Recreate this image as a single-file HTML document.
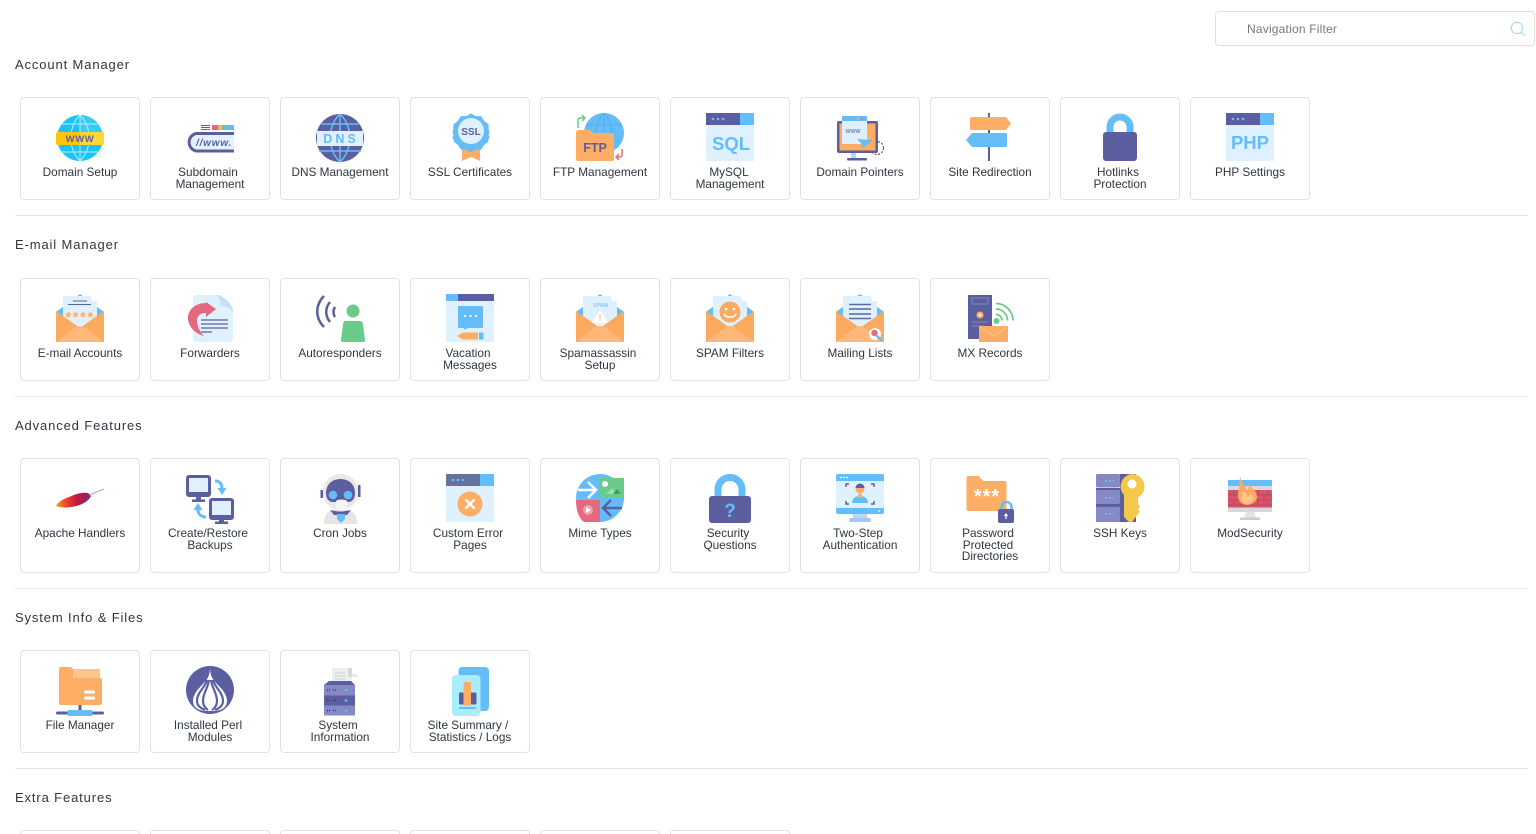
<!DOCTYPE html>
<html><head><meta charset="utf-8"><title>Control Panel</title>
<style>
html,body{margin:0;padding:0;background:#fff;width:1536px;height:834px;overflow:hidden;font-family:"Liberation Sans",sans-serif}
.t{position:absolute;width:118px;border:1px solid #e2e2e2;border-radius:4px;background:#fff}
.t svg{position:absolute;left:35px;top:15px;width:48px;height:48px;overflow:visible}
.l{position:absolute;left:0;right:0;top:69px;text-align:center;font-size:11.8px;line-height:11.6px;color:#2f3640}
.s{position:relative;left:-2px}
h2{position:absolute;left:15px;margin:0;font-weight:normal;font-size:13px;line-height:16px;letter-spacing:.87px;color:#2f3640}
.d{position:absolute;left:15px;width:1513px;height:1px;background:#e3e3e3}
.f{position:absolute;left:1215px;top:11px;width:318px;height:33px;border:1px solid #e0e0e0;border-radius:4px}
.f span{position:absolute;left:31px;top:10px;font-size:12px;line-height:15px;color:#777;letter-spacing:.2px}
.f svg{position:absolute;left:294px;top:9px}
.e{height:3px;border-bottom:0;border-radius:4px 4px 0 0}
text{font-family:"Liberation Sans",sans-serif}
</style></head><body>

<div class="f"><span>Navigation Filter</span><svg width="16" height="16" viewBox="0 0 16 16" fill="none" stroke="#a5dcf8" stroke-width="1.1"><circle cx="7" cy="7" r="5.7"/><path d="M11 11l4 4"/></svg></div>

<h2 style="top:57px">Account Manager</h2>

<div class="t" style="left:20px;top:97px;height:101px"><svg viewBox="0 0 48 48"><circle cx="24" cy="25" r="23" fill="#1cc2f4"/><path d="M24 2a23 23 0 0 1 23 23H24z" fill="#35cdf8"/><path d="M6 11h36M3 39h42M24 2v46M24 2c-12 12-12 34 0 46M24 2c12 12 12 34 0 46" fill="none" stroke="#b9eefc" stroke-width="1"/><rect y="19" width="48" height="13" rx="2" fill="#ffc40f"/><rect x="24" y="19" width="24" height="13" rx="2" fill="#ffd633"/><text x="24" y="29" font-size="9.500" font-weight="bold" fill="#5c5f9f" text-anchor="middle" letter-spacing=".6">WWW</text></svg><div class="l">Domain Setup</div></div>

<div class="t" style="left:150px;top:97px;height:101px"><svg viewBox="0 0 48 48"><path d="M15 12.500h9M15 14.500h9M15 16.500h9" stroke="#5c5f9f" stroke-width="1.100"/><rect x="26" y="12" width="6" height="5" fill="#e3697f"/><rect x="32" y="12" width="4" height="5" fill="#fdad64"/><rect x="36" y="12" width="4" height="5" fill="#69ca8a"/><rect x="40" y="12" width="8" height="5" fill="#64bdf9"/><path d="M48 20.500H10a9 9 0 0 0 0 17.500h38" fill="#e2f2fe" stroke="#5c5f9f" stroke-width="3"/><text x="10" y="33" font-size="10" font-weight="bold" font-style="italic" fill="#5c5f9f" letter-spacing=".8">//www.</text></svg><div class="l"><span class="s">Subdomain</span><br>Management</div></div>

<div class="t" style="left:280px;top:97px;height:101px"><svg viewBox="0 0 48 48"><circle cx="24" cy="25" r="24" fill="#5c5f9f"/><path d="M5 11h38M3 38h42M24 1v48M24 1c-13 12-13 36 0 48M24 1c13 12 13 36 0 48" fill="none" stroke="#64bdf9" stroke-width="1.500"/><rect x="1" y="18" width="46" height="15" fill="#dff1fe"/><text x="25" y="30" font-size="12.500" font-weight="bold" fill="#64bdf9" text-anchor="middle" letter-spacing="3">DNS</text></svg><div class="l">DNS Management</div></div>

<div class="t" style="left:410px;top:97px;height:101px"><svg viewBox="0 0 48 48"><path d="M16 28h18v20l-9-4-9 4z" fill="#fdad64"/><path transform="translate(25 18) scale(.93) translate(-25 -19)" d="M25 0l5 3 6 0 3 5 5 4 0 6 1 1-1 5 1 1-2 6-4 3-3 5-6 0-5 3-5-3-6 0-3-5-4-3-2-6 1-1-1-5 1-1 0-6 5-4 3-5 6 0z" fill="#64bdf9"/><circle cx="25" cy="18" r="13" fill="#dff1fe"/><text x="25" y="22" font-size="10" font-weight="bold" fill="#5c5f9f" text-anchor="middle">SSL</text></svg><div class="l">SSL Certificates</div></div>

<div class="t" style="left:540px;top:97px;height:101px"><svg viewBox="0 0 48 48"><circle cx="28" cy="20" r="20" fill="#64bdf9"/><path d="M28 0v40M28 0c-10 10-10 30 0 40M28 0c10 10 10 30 0 40M10 12h36M10 28h36" fill="none" stroke="#4fa9e8" stroke-width=".8"/><path d="M2 15V7a2 2 0 0 1 2-2h4M6 2l3 3-3 3" fill="none" stroke="#69ca8a" stroke-width="1.500"/><path d="M46 36v6a2 2 0 0 1-2 2h-4M43 41l-3 3 3 3" fill="none" stroke="#e3697f" stroke-width="1.500"/><path d="M0 20a3 3 0 0 1 2-3h12l3 3h19a2 2 0 0 1 2 2v24a2 2 0 0 1-2 2H2a2 2 0 0 1-2-2z" fill="#fdad64"/><text x="19" y="39" font-size="12.500" font-weight="bold" fill="#5c5f9f" text-anchor="middle">FTP</text></svg><div class="l">FTP Management</div></div>

<div class="t" style="left:670px;top:97px;height:101px"><svg viewBox="0 0 48 48"><rect width="48" height="48" fill="#dff1fe"/><rect width="34" height="12" fill="#5c5f9f"/><path d="M34 0h13a1 1 0 0 1 1 1v11H34z" fill="#64bdf9"/><circle cx="7" cy="6" r="1.300" fill="#64bdf9"/><circle cx="12" cy="6" r="1.300" fill="#64bdf9"/><circle cx="17" cy="6" r="1.300" fill="#64bdf9"/><text x="25" y="37" font-size="18.500" font-weight="bold" fill="#64bdf9" text-anchor="middle">SQL</text></svg><div class="l"><span class="s" style="left:-1px">MySQL</span><br>Management</div></div>

<div class="t" style="left:800px;top:97px;height:101px"><svg viewBox="0 0 48 48"><path d="M15 39h5v7h-5z" fill="#b5d8f3"/><rect x="11" y="45" width="20" height="2.500" rx="1" fill="#5c5f9f"/><circle cx="41" cy="35" r="6.500" fill="none" stroke="#5c5f9f" stroke-width="1.300" stroke-dasharray="2 1.500"/><rect x="1" y="8" width="41" height="32" rx="2" fill="#5c5f9f"/><rect x="3.500" y="10.500" width="36" height="27" fill="#fdad64"/><rect x="6" y="3" width="25" height="28" fill="#dff1fe"/><path d="M6 3h25v5H6z" fill="#64bdf9"/><circle cx="18" cy="5.500" r="1" fill="#69ca8a"/><circle cx="22" cy="5.500" r="1" fill="#fdad64"/><circle cx="26" cy="5.500" r="1" fill="#e3697f"/><text x="17" y="20" font-size="7" fill="#5c5f9f" text-anchor="middle">www</text><path d="M21 26l16 1-10 8-2-5z" fill="#64bdf9"/></svg><div class="l">Domain Pointers</div></div>

<div class="t" style="left:930px;top:97px;height:101px"><svg viewBox="0 0 48 48"><rect x="22" width="2" height="48" fill="#5c5f9f"/><path d="M5 4h35l5 6.500-5 6.500H5a1 1 0 0 1-1-1V5a1 1 0 0 1 1-1z" fill="#fdad64"/><path d="M6 20h34a1 1 0 0 1 1 1v12a1 1 0 0 1-1 1H6l-6-7z" fill="#64bdf9"/></svg><div class="l">Site Redirection</div></div>

<div class="t" style="left:1060px;top:97px;height:101px"><svg viewBox="0 0 48 48"><path d="M14 21V14a10 10 0 0 1 20 0v7" fill="none" stroke="#64bdf9" stroke-width="7"/><rect x="7" y="19" width="34" height="29" rx="3" fill="#5c5f9f"/></svg><div class="l"><span class="s">Hotlinks</span><br>Protection</div></div>

<div class="t" style="left:1190px;top:97px;height:101px"><svg viewBox="0 0 48 48"><rect width="48" height="48" fill="#dff1fe"/><rect width="34" height="12" fill="#5c5f9f"/><path d="M34 0h13a1 1 0 0 1 1 1v11H34z" fill="#64bdf9"/><circle cx="7" cy="6" r="1.300" fill="#64bdf9"/><circle cx="12" cy="6" r="1.300" fill="#64bdf9"/><circle cx="17" cy="6" r="1.300" fill="#64bdf9"/><text x="24" y="36" font-size="18.500" font-weight="bold" fill="#64bdf9" text-anchor="middle">PHP</text></svg><div class="l">PHP Settings</div></div>

<div class="d" style="top:215px"></div>
<h2 style="top:237px">E-mail Manager</h2>

<div class="t" style="left:20px;top:278px;height:101px"><svg viewBox="0 0 48 48"><path d="M0 18L24 0l24 18-24 14z" fill="#64bdf9"/><path d="M7 2h28l1 5h5v20L24 36 7 27z" fill="#dff1fe"/><path d="M17 7h14M12 10.500h23" stroke="#5c5f9f" stroke-width="1.100"/><text x="24" y="28" font-size="15" font-weight="bold" fill="#fdad64" text-anchor="middle" letter-spacing="1.500">****</text><path d="M0 17l24 17 24-17v31H0z" fill="#fbaa60"/><path d="M0 48l20-15q4-2 8 0l20 15z" fill="#ffb878"/></svg><div class="l">E-mail Accounts</div></div>

<div class="t" style="left:150px;top:278px;height:101px"><svg viewBox="0 0 48 48"><path d="M10 1h25l12 13v31a3 3 0 0 1-3 3H10a3 3 0 0 1-3-3V4a3 3 0 0 1 3-3z" fill="#dff1fe"/><path d="M30 1c6 0 17 8 17 17-4-6-10-6-12-6 0-3-1-8-5-11z" fill="#c3dffc"/><path d="M20 8l10 7-10 8v-4c-5 0-9 2-9 8 0 5 3 11 7 15-8-2-16-9-16-18 0-9 8-15 18-15z" fill="#e3697f"/><path d="M15 26h27M15 30h27M15 34h27M15 38h11" stroke="#5c5f9f" stroke-width="1.300"/></svg><div class="l">Forwarders</div></div>

<div class="t" style="left:280px;top:278px;height:101px"><svg viewBox="0 0 48 48"><path d="M8 2c-9 9-9 22 0 31M14 8c-5 6-5 14 0 20M19 13c-2 3-2 7 0 10" fill="none" stroke="#5c5f9f" stroke-width="2.500"/><circle cx="37" cy="17" r="6.500" fill="#69ca8a"/><path d="M30 27h14c2 0 3 2 3 4l2 15c0 2-1 2-2 2H27c-1 0-2 0-2-2l2-15c0-3 1-4 3-4z" fill="#69ca8a"/></svg><div class="l">Autoresponders</div></div>

<div class="t" style="left:410px;top:278px;height:101px"><svg viewBox="0 0 48 48"><rect width="48" height="48" fill="#dff1fe"/><rect width="12" height="7" fill="#64bdf9"/><rect x="12" width="36" height="7" fill="#5c5f9f"/><path d="M13 12h23a1 1 0 0 1 1 1v20a1 1 0 0 1-1 1H23l-5 1.500V34h-5a1 1 0 0 1-1-1V13a1 1 0 0 1 1-1z" fill="#64bdf9"/><circle cx="19" cy="22" r="1.100" fill="#fff"/><circle cx="24.500" cy="22" r="1.100" fill="#fff"/><circle cx="30" cy="22" r="1.100" fill="#fff"/><path d="M11 42l6-3.500h15v7H17z" fill="#fdad64"/><rect x="33" y="38.500" width="4.500" height="7" fill="#64bdf9"/></svg><div class="l"><span class="s">Vacation</span><br>Messages</div></div>

<div class="t" style="left:540px;top:278px;height:101px"><svg viewBox="0 0 48 48"><path d="M0 18L24 0l24 18-24 14z" fill="#64bdf9"/><path d="M7 2h28l1 5h5v20L24 36 7 27z" fill="#dff1fe"/><text x="24.500" y="13" font-size="5.500" fill="#64bdf9" text-anchor="middle">SPAM</text><path d="M24 16l8 13H16z" fill="#fff"/><path d="M24 20v4M24 25v1.500" stroke="#fdad64" stroke-width="1"/><path d="M0 17l24 17 24-17v31H0z" fill="#fbaa60"/><path d="M0 48l20-15q4-2 8 0l20 15z" fill="#ffb878"/></svg><div class="l"><span class="s">Spamassassin</span><br>Setup</div></div>

<div class="t" style="left:670px;top:278px;height:101px"><svg viewBox="0 0 48 48"><path d="M0 18L24 0l24 18-24 14z" fill="#64bdf9"/><path d="M7 2h28l1 5h5v20L24 36 7 27z" fill="#dff1fe"/><circle cx="24" cy="18" r="10.500" fill="#fbaa60"/><circle cx="20" cy="15" r="1.400" fill="#fff"/><circle cx="28" cy="15" r="1.400" fill="#fff"/><path d="M18 19.500c1 5 11 5 12 0" fill="none" stroke="#fff" stroke-width="1.700"/><path d="M0 17l24 17 24-17v31H0z" fill="#fbaa60"/><path d="M0 48l20-15q4-2 8 0l20 15z" fill="#ffb878"/></svg><div class="l">SPAM Filters</div></div>

<div class="t" style="left:800px;top:278px;height:101px"><svg viewBox="0 0 48 48"><path d="M0 18L24 0l24 18-24 14z" fill="#64bdf9"/><path d="M7 2h28l1 5h5v20L24 36 7 27z" fill="#dff1fe"/><path d="M13 10.500h22M13 15h22M13 20h22M13 24.500h22" stroke="#5f64a3" stroke-width="1.600"/><path d="M0 17l24 17 24-17v31H0z" fill="#fbaa60"/><path d="M0 48l20-15q4-2 8 0l20 15z" fill="#ffb878"/><circle cx="39" cy="40" r="6" fill="#fff"/><circle cx="38.500" cy="39" r="3.200" fill="#e3697f"/><path d="M40 41l6 6" stroke="#64bdf9" stroke-width="2.500"/></svg><div class="l">Mailing Lists</div></div>

<div class="t" style="left:930px;top:278px;height:101px"><svg viewBox="0 0 48 48"><rect x="2" y="1" width="24" height="44" fill="#5c5f9f"/><rect x="6" y="4" width="16" height="6" fill="none" stroke="#8385bf" stroke-width="1"/><circle cx="14" cy="21" r="3.500" fill="#fdad64"/><circle cx="14" cy="21" r="1.300" fill="#fff"/><path d="M6 28h16M6 32h12" stroke="#8385bf" stroke-width="1"/><path d="M30 9.500a17 17 0 0 1 17 17M30 15a11.500 11.500 0 0 1 11.500 11.500M30 20.500a6 6 0 0 1 6 6" fill="none" stroke="#69ca8a" stroke-width="1.700"/><circle cx="30.500" cy="27" r="3" fill="#69ca8a"/><rect x="13" y="32" width="29" height="16" fill="#fdad64"/><path d="M14 33l14 9 13-9" fill="none" stroke="#ffc48d" stroke-width="1"/></svg><div class="l">MX Records</div></div>

<div class="d" style="top:396px"></div>
<h2 style="top:418px">Advanced Features</h2>

<div class="t" style="left:20px;top:458px;height:113px"><svg viewBox="0 0 48 48"><defs><linearGradient id="a" x1="0" x2="1"><stop offset="0" stop-color="#fba01e"/><stop offset=".3" stop-color="#e7442f"/><stop offset=".6" stop-color="#c4173f"/><stop offset="1" stop-color="#7d2a70"/></linearGradient></defs><path d="M0 32c2-4 7-7 13-9 7-3 12-5 19-4l3 3c-2 4-5 6-9 8-7 3-18 5-26 2z" fill="url(#a)"/><path d="M33 21l15-6" stroke="#a77ea9" stroke-width=".7"/></svg><div class="l">Apache Handlers</div></div>

<div class="t" style="left:150px;top:458px;height:113px"><svg viewBox="0 0 48 48"><rect y="1" width="25" height="22" rx="3" fill="#5c5f9f"/><rect x="3" y="4" width="19" height="14" fill="#dff1fe"/><rect x="10" y="23" width="5" height="3" fill="#5c5f9f"/><rect x="6" y="25.500" width="13" height="2.500" fill="#5c5f9f"/><rect x="23" y="24" width="25" height="22" rx="3" fill="#5c5f9f"/><rect x="26" y="27" width="19" height="14" fill="#dff1fe"/><rect x="33" y="46" width="5" height="2" fill="#5c5f9f"/><rect x="29" y="47.500" width="13" height="2.500" fill="#5c5f9f"/><path d="M29 7c4 0 7 2 7 8" fill="none" stroke="#64bdf9" stroke-width="3"/><path d="M31.500 14h9l-4.500 7z" fill="#64bdf9"/><path d="M20 43c-4 0-8-2-8-8" fill="none" stroke="#64bdf9" stroke-width="3"/><path d="M7.500 36h9l-4.500-7z" fill="#64bdf9"/></svg><div class="l"><span class="s">Create/Restore</span><br>Backups</div></div>

<div class="t" style="left:280px;top:458px;height:113px"><svg viewBox="0 0 48 48"><circle cx="24.500" cy="18" r="18" fill="#e9e9e9"/><path d="M8 50c0-10 4-13 10-14h13c6 1 10 4 10 14z" fill="#e5e5e5"/><rect x="4.500" y="16" width="2.500" height="8" fill="#5c5f9f"/><rect x="42" y="11" width="2.500" height="12" fill="#5c5f9f"/><path d="M24.500 5c10 0 14.500 7 14.500 14 0 6-3 9-7 9H17c-4 0-7-3-7-9C10 12 14.500 5 24.500 5z" fill="#5c5f9f"/><circle cx="17" cy="21" r="4.300" fill="#64bdf9"/><circle cx="32" cy="21" r="4.300" fill="#64bdf9"/><path d="M20 27c2-2 9-2 11 0v7l-3 2h-5l-3-2z" fill="#f4f4f4"/><path d="M14 36l8 1.500h5l8-1.500-4 5H18z" fill="#5c5f9f"/><path d="M21 40h8v5l-4 4-4-4z" fill="#64bdf9"/></svg><div class="l">Cron Jobs</div></div>

<div class="t" style="left:410px;top:458px;height:113px"><svg viewBox="0 0 48 48"><rect width="48" height="48" fill="#dff1fe"/><rect width="34" height="12" fill="#66739f"/><path d="M34 0h13a1 1 0 0 1 1 1v11H34z" fill="#64bdf9"/><circle cx="7" cy="6" r="1.300" fill="#64bdf9"/><circle cx="12" cy="6" r="1.300" fill="#64bdf9"/><circle cx="17" cy="6" r="1.300" fill="#64bdf9"/><circle cx="24" cy="30" r="12.500" fill="#fdad64"/><path d="M19.500 25.500l9 9M28.500 25.500l-9 9" stroke="#fff" stroke-width="2.500"/></svg><div class="l"><span class="s">Custom Error</span><br>Pages</div></div>

<div class="t" style="left:540px;top:458px;height:113px"><svg viewBox="0 0 48 48"><circle cx="24" cy="24" r="24" fill="#64bdf9"/><rect x="23" y="4" width="25" height="19" fill="#69ca8a"/><circle cx="29" cy="10" r="3" fill="#fff"/><path d="M30 20l6-6 5 6z" fill="#9adfb0"/><path d="M37 20l4-5 4 5z" fill="#3f9e61"/><path d="M2 16h17M12 8l8 8-8 8" fill="none" stroke="#fff" stroke-width="2.500"/><path d="M0 26h24v22H8C2 44 0 34 0 26z" fill="#e3697f"/><circle cx="12" cy="36" r="5" fill="#f3a0ae"/><path d="M10 33l5 3-5 3z" fill="#fff"/><path d="M46 34H28M35 26l-8 8 8 8" fill="none" stroke="#5c5f9f" stroke-width="2.500"/></svg><div class="l">Mime Types</div></div>

<div class="t" style="left:670px;top:458px;height:113px"><svg viewBox="0 0 48 48"><path d="M12 26V15.500a12 12 0 0 1 24 0V26" fill="none" stroke="#64bdf9" stroke-width="7"/><rect x="3" y="22" width="42" height="27" rx="3" fill="#5c5f9f"/><text x="24" y="43" font-size="19" font-weight="bold" fill="#64bdf9" text-anchor="middle">?</text></svg><div class="l"><span class="s">Security</span><br>Questions</div></div>

<div class="t" style="left:800px;top:458px;height:113px"><svg viewBox="0 0 48 48"><rect x="17" y="39" width="14" height="6" fill="#b5d8f3"/><rect x="13" y="44" width="22" height="4" rx="2" fill="#a9c8e8"/><rect width="48" height="40" rx="2" fill="#64bdf9"/><rect y="7" width="48" height="27" fill="#dff1fe"/><circle cx="5" cy="3.500" r=".9" fill="#fff"/><circle cx="8" cy="3.500" r=".9" fill="#fff"/><circle cx="11" cy="3.500" r=".9" fill="#fff"/><circle cx="43" cy="37" r=".9" fill="#fff"/><path d="M10 13v-3h3M38 13v-3h-3M10 27v3h3M38 27v3h-3" fill="none" stroke="#5c5f9f" stroke-width="1.500"/><circle cx="24" cy="15" r="4.500" fill="#fdad64"/><path d="M19.500 14a4.500 4.500 0 0 1 9 0z" fill="#5c5f9f"/><path d="M16 29c0-5 4-7 8-7s8 2 8 7z" fill="#64bdf9"/><path d="M22 20h4v4h-4z" fill="#fdad64"/></svg><div class="l"><span class="s">Two-Step</span><br>Authentication</div></div>

<div class="t" style="left:930px;top:458px;height:113px"><svg viewBox="0 0 48 48"><path d="M.5 4a2 2 0 0 1 2-2h10l5 5h21a2 2 0 0 1 2 2v26a2 2 0 0 1-2 2H2.500a2 2 0 0 1-2-2z" fill="#fdad64"/><text x="21" y="29" font-size="20" font-weight="bold" fill="#fff" text-anchor="middle" letter-spacing="1">***</text><path d="M35.500 37v-4a5 5 0 0 1 10 0v4" fill="none" stroke="#64bdf9" stroke-width="2.500"/><rect x="32" y="35" width="16" height="14" rx="2" fill="#5c5f9f"/><path d="M40 45v-4M38.500 42l1.500-2 1.500 2" fill="none" stroke="#fff" stroke-width="1.200"/></svg><div class="l"><span class="s">Password</span><br><span class="s">Protected</span><br>Directories</div></div>

<div class="t" style="left:1060px;top:458px;height:113px"><svg viewBox="0 0 48 48"><rect x="24" width="16" height="48" fill="#5c5f9f"/><rect y="14" width="26" height="34" fill="#5c5f9f"/><rect width="24" height="13.500" rx="1.500" fill="#8689c3"/><rect y="16" width="24" height="14" rx="1.500" fill="#8689c3"/><rect y="33" width="24" height="15" rx="1.500" fill="#8689c3"/><path d="M9 7h9M9 24h9M9 40h9" stroke="#64bdf9" stroke-width="2" stroke-dasharray="2 2"/><path d="M36 0a12.500 12.500 0 0 1 6 23.500V30l2 2.500-2 2.500 2 2.500-2 2.500-6 8h-3l-5-5V21A12.500 12.500 0 0 1 36 0z" fill="#f4c84a"/><circle cx="36" cy="10" r="4.500" fill="#fff"/></svg><div class="l">SSH Keys</div></div>

<div class="t" style="left:1190px;top:458px;height:113px"><svg viewBox="0 0 48 48"><rect x="2" y="6" width="44" height="32" fill="#64bdf9"/><rect x="2" y="12" width="44" height="4" fill="#d7dbe0"/><rect x="2" y="16" width="44" height="18" fill="#d9536a"/><path d="M2 21h44M2 26h44M2 31h44M8 16v5M20 16v5M32 16v5M42 16v5M14 21v5M26 21v5M38 21v5M8 26v5M20 26v5M32 26v5M42 26v5" stroke="#b9405a" stroke-width=".8"/><rect x="2" y="33.500" width="44" height="4.500" fill="#d5d9dc"/><path d="M20 38h8l2 6H18z" fill="#e3e3e3"/><rect x="14" y="43.500" width="20" height="2.500" fill="#ccc"/><path d="M14 2c1 7 5 9 7 14 2-2 2-4 2-5 5 4 8 8 8 12 0 4-5 8-10 8s-9-4-9-9c0-6 2-10 2-20z" fill="#fbaa60"/><path d="M18 15c1 4 3 6 4 8 2-1 2-3 2-4 3 3 4 6 2 9-2 2-8 3-10 0-2-4 1-8 2-13z" fill="#ffc584"/></svg><div class="l">ModSecurity</div></div>

<div class="d" style="top:588px"></div>
<h2 style="top:610px">System Info &amp; Files</h2>

<div class="t" style="left:20px;top:650px;height:101px"><svg viewBox="0 0 48 48"><rect x="15" y="3" width="29" height="12" rx="1" fill="#ffc48a"/><path d="M3 3a2 2 0 0 1 2-2h9a3 3 0 0 1 3 3v8h27a2 2 0 0 1 2 2v23a2 2 0 0 1-2 2H5a2 2 0 0 1-2-2z" fill="#fdad64"/><rect x="28" y="24.500" width="11" height="3" rx="1" fill="#fff"/><rect x="28" y="30.500" width="11" height="3" rx="1" fill="#fff"/><rect x="22.500" y="39" width="3" height="6" fill="#5c5f9f"/><rect y="45.500" width="48" height="3" rx="1.500" fill="#5c5f9f"/><rect x="11.500" y="44" width="25" height="6" rx="1" fill="#64bdf9"/></svg><div class="l">File Manager</div></div>

<div class="t" style="left:150px;top:650px;height:101px"><svg viewBox="0 0 48 48"><circle cx="24" cy="24" r="24" fill="#5c5f9f"/><path d="M24 1c0 8-2 12-7 17-6 6-10 11-10 17 0 6 5 10 14 10h6c9 0 14-4 14-10 0-6-4-11-10-17-5-5-7-9-7-17z" fill="#fff"/><path d="M21 14c-2 8-10 12-10 21 0 4 3 7 8 9M27 14c2 8 10 12 10 21 0 4-3 7-8 9M23 14c-1 8-6 13-6 21 0 4 2 7 5 9M25 14c1 8 6 13 6 21 0 4-2 7-5 9" fill="none" stroke="#5c5f9f" stroke-width="2.200"/></svg><div class="l"><span class="s">Installed Perl</span><br>Modules</div></div>

<div class="t" style="left:280px;top:650px;height:101px"><svg viewBox="0 0 48 48"><path d="M16 2h20v15H16z" fill="#eceff1"/><rect x="32" y="2" width="4" height="9" fill="#d5d9dc"/><rect x="36" y="8" width="5" height="3" fill="#e5e8ea"/><path d="M19 7h10M19 10h10M19 13h10" stroke="#ccd0d3" stroke-width="1"/><path d="M8 19l5-4h22l4 4z" fill="#5c5f9f"/><rect x="8" y="19" width="31" height="10.500" fill="#8689c3"/><rect x="8" y="29.500" width="31" height="10" fill="#5c5f9f"/><rect x="8" y="39.500" width="31" height="10" fill="#8689c3"/><path d="M11 24h4M17 24h4M11 34.500h4M17 34.500h4M11 44.500h4M17 44.500h4" stroke="#2e3060" stroke-width="1.300" stroke-dasharray="1 1"/><circle cx="30" cy="24" r="1.300" fill="#64bdf9"/><circle cx="30" cy="34.500" r="1.300" fill="#64bdf9"/><circle cx="30" cy="44.500" r="1.300" fill="#64bdf9"/></svg><div class="l"><span class="s">System</span><br>Information</div></div>

<div class="t" style="left:410px;top:650px;height:101px"><svg viewBox="0 0 48 48"><rect x="12.500" y="1" width="30.500" height="44" rx="4" fill="#64bdf9"/><rect x="6" y="9" width="28.500" height="41" rx="4" fill="#a9eeff"/><rect x="13" y="26.500" width="17.500" height="12" rx="1" fill="#5c5f9f"/><rect x="17.500" y="16" width="7.500" height="23.500" rx="1" fill="#fdad64"/><rect x="13" y="41" width="17" height="2" fill="#64bdf9"/></svg><div class="l"><span class="s">Site Summary /</span><br>Statistics / Logs</div></div>

<div class="d" style="top:768px"></div>
<h2 style="top:790px">Extra Features</h2>

<div class="t e" style="left:20px;top:830px"></div>
<div class="t e" style="left:150px;top:830px"></div>
<div class="t e" style="left:280px;top:830px"></div>
<div class="t e" style="left:410px;top:830px"></div>
<div class="t e" style="left:540px;top:830px"></div>
<div class="t e" style="left:670px;top:830px"></div>

</body></html>
